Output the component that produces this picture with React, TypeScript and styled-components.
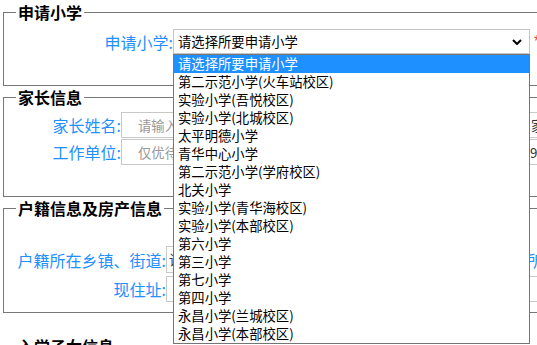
import React from 'react';
import styled, { createGlobalStyle } from 'styled-components';

const GlobalStyle = createGlobalStyle`
    html, body {
        margin: 0;
        padding: 0;
        overflow: hidden;
        background: #fff;
    }
    body {
        font-family: "Liberation Sans", "Noto Sans CJK SC", sans-serif;
        color: #000;
    }
`

const Page = styled.form`
    width: 1100px;
    padding-top: 1px;
`

interface BoxProps {
    $pt: number;
    $pb: number;
    $mt?: number;
}

const Fieldset = styled.fieldset<BoxProps>`
    margin: ${p => p.$mt || 0}px 0 0 3px;
    padding: ${p => p.$pt}px 12px ${p => p.$pb}px;
    border: 1px solid #777;
    min-width: 0;
`

const Legend = styled.legend`
    padding: 0 2px;
    font-size: 16px;
    line-height: 22px;
    font-weight: bold;
    font-family: "Noto Sans CJK SC", sans-serif;
`

const Row = styled.div<{ $gap?: number }>`
    display: flex;
    align-items: center;
    margin-bottom: ${p => p.$gap || 0}px;
`

const Label = styled.label<{ $w: number }>`
    width: ${p => p.$w}px;
    flex: none;
    text-align: right;
    font-size: 16px;
    color: #1e90ff;
    font-family: "Noto Sans CJK SC", sans-serif;
    white-space: nowrap;
`

const SideLabel = styled(Label)`
    text-align: left;
    margin-left: 6px;
`

const SelectWrap = styled.div`
    position: relative;
`

const SelectBox = styled.div<{ $w: number; $h: number }>`
    box-sizing: border-box;
    width: ${p => p.$w}px;
    height: ${p => p.$h}px;
    border: 1px solid #c4c4c4;
    background: #fff;
    display: flex;
    align-items: center;
    padding: 0 7px 0 4px;
    font-size: 13.33px;
    font-family: "Noto Sans CJK SC", sans-serif;
    & > span {
        flex: 1;
        white-space: nowrap;
        overflow: hidden;
    }
`

const Required = styled.span`
    color: #f33;
    font-size: 16px;
    margin-left: 4px;
    align-self: flex-start;
    margin-top: 4px;
`

const Popup = styled.ul`
    position: absolute;
    top: 100%;
    left: 0;
    z-index: 10;
    box-sizing: border-box;
    width: 357px;
    margin: 0;
    padding: 0;
    list-style: none;
    background: #fff;
    border: 1px solid #767676;
    font-size: 13.33px;
    font-family: "Noto Sans CJK SC", sans-serif;
`

const Option = styled.li<{ $active?: boolean }>`
    height: 18px;
    line-height: 18px;
    padding-left: 4px;
    white-space: nowrap;
    background: ${p => p.$active ? '#1e90ff' : '#fff'};
    color: ${p => p.$active ? '#fff' : '#000'};
`

const Input = styled.div<{ $w: number; $h: number; $muted?: boolean; $pl?: number }>`
    box-sizing: border-box;
    flex: none;
    width: ${p => p.$w}px;
    height: ${p => p.$h}px;
    border: 1px solid #c8c8c8;
    padding-left: ${p => p.$pl ?? 16}px;
    display: flex;
    align-items: center;
    font-size: 13.33px;
    font-family: "Noto Sans CJK SC", sans-serif;
    color: ${p => p.$muted ? '#999' : '#333'};
    white-space: nowrap;
    overflow: hidden;
`

const Chevron = () => (
    <svg width="10" height="6" viewBox="0 0 10 6">
        <path d="M1 1 L5 5 L9 1" fill="none" stroke="#000" strokeWidth="2" />
    </svg>
)

const schools = [
    '请选择所要申请小学',
    '第二示范小学(火车站校区)',
    '实验小学(吾悦校区)',
    '实验小学(北城校区)',
    '太平明德小学',
    '青华中心小学',
    '第二示范小学(学府校区)',
    '北关小学',
    '实验小学(青华海校区)',
    '实验小学(本部校区)',
    '第六小学',
    '第三小学',
    '第七小学',
    '第四小学',
    '永昌小学(兰城校区)',
    '永昌小学(本部校区)',
]

const App: React.FC = () => {
    return (
        <>
            <GlobalStyle />
            <Page>
                <Fieldset $pt={6} $pb={31}>
                    <Legend>申请小学</Legend>
                    <Row>
                        <Label $w={157}>申请小学:</Label>
                        <SelectWrap>
                            <SelectBox $w={357} $h={25}>
                                <span>{schools[0]}</span>
                                <Chevron />
                            </SelectBox>
                            <Popup>
                                {schools.map((s, i) => (
                                    <Option key={s} $active={i === 0}>{s}</Option>
                                ))}
                            </Popup>
                        </SelectWrap>
                        <Required>*</Required>
                    </Row>
                </Fieldset>

                <Fieldset $pt={4} $pb={31}>
                    <Legend>家长信息</Legend>
                    <Row $gap={1}>
                        <Label $w={105}>家长姓名:</Label>
                        <Input $w={405} $h={26} $muted>请输入家长姓名</Input>
                        <Input $w={300} $h={26} $pl={4}>家庭住址</Input>
                    </Row>
                    <Row>
                        <Label $w={105}>工作单位:</Label>
                        <Input $w={405} $h={26} $muted>仅优待单位请填写</Input>
                        <Input $w={300} $h={26} $pl={3}>9455</Input>
                    </Row>
                </Fieldset>

                <Fieldset $pt={27} $pb={10}>
                    <Legend>户籍信息及房产信息</Legend>
                    <Row $gap={3}>
                        <Label $w={150}>户籍所在乡镇、街道:</Label>
                        <Input $w={355} $h={27} $pl={2}>请选择</Input>
                        <SideLabel $w={120}>所在社区:</SideLabel>
                    </Row>
                    <Row>
                        <Label $w={150}>现住址:</Label>
                        <Input $w={600} $h={26} $muted>请输入现住址</Input>
                    </Row>
                </Fieldset>

                <Fieldset $pt={10} $pb={20} $mt={22}>
                    <Legend>入学子女信息</Legend>
                    <Row>
                        <Label $w={150}>子女姓名:</Label>
                        <Input $w={355} $h={26} $muted>请输入子女姓名</Input>
                    </Row>
                </Fieldset>
            </Page>
        </>
    )
}

export default App;
